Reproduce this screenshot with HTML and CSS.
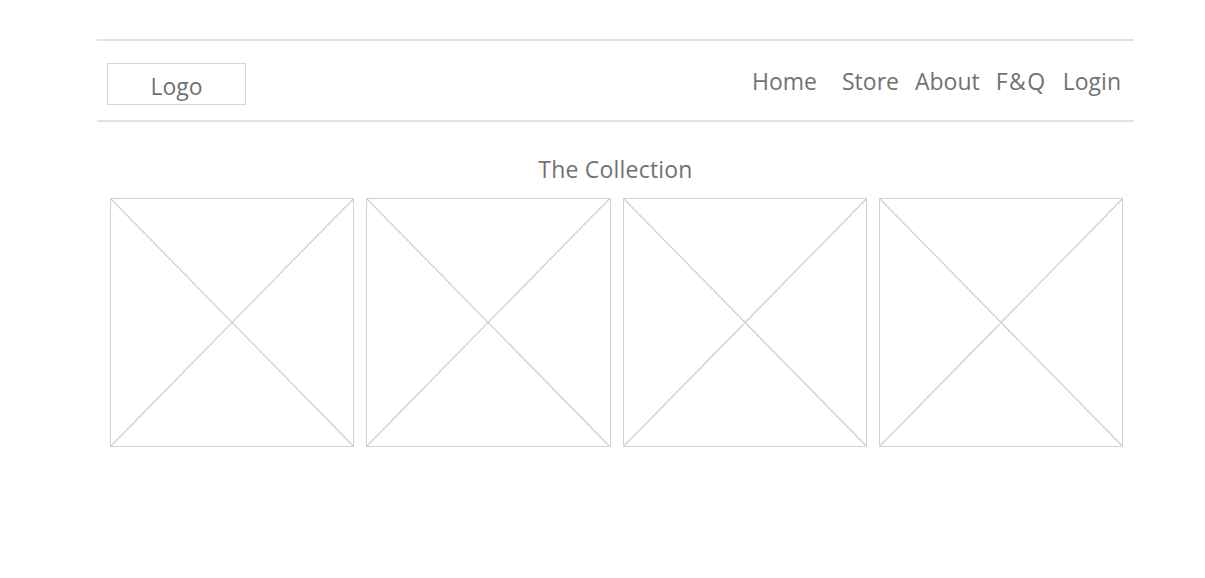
FILE: index.html
```html
<!DOCTYPE html>
<html>
<head>
<meta charset="utf-8">
<link rel="stylesheet" href="styles.css">
</head>
<body>
<div class="page">
  <header class="header">
    <div class="logo">Logo</div>
    <nav class="nav">
      <a class="nav-item nav-home">Home</a>
      <a class="nav-item">Store</a>
      <a class="nav-item">About</a>
      <a class="nav-item nav-fq">F&amp;Q</a>
      <a class="nav-item">Login</a>
    </nav>
  </header>
  <h2 class="title">The Collection</h2>
  <div class="grid">
    <div class="ph"><svg viewBox="0 0 100 100" preserveAspectRatio="none"><line x1="0" y1="0" x2="100" y2="100" vector-effect="non-scaling-stroke"/><line x1="100" y1="0" x2="0" y2="100" vector-effect="non-scaling-stroke"/></svg></div>
    <div class="ph"><svg viewBox="0 0 100 100" preserveAspectRatio="none"><line x1="0" y1="0" x2="100" y2="100" vector-effect="non-scaling-stroke"/><line x1="100" y1="0" x2="0" y2="100" vector-effect="non-scaling-stroke"/></svg></div>
    <div class="ph"><svg viewBox="0 0 100 100" preserveAspectRatio="none"><line x1="0" y1="0" x2="100" y2="100" vector-effect="non-scaling-stroke"/><line x1="100" y1="0" x2="0" y2="100" vector-effect="non-scaling-stroke"/></svg></div>
    <div class="ph"><svg viewBox="0 0 100 100" preserveAspectRatio="none"><line x1="0" y1="0" x2="100" y2="100" vector-effect="non-scaling-stroke"/><line x1="100" y1="0" x2="0" y2="100" vector-effect="non-scaling-stroke"/></svg></div>
  </div>
</div>
</body>
</html>
```
FILE: styles.css
```css
html, body {
  margin: 0;
  padding: 0;
  background: #fff;
}
body {
  font-family: "Open Sans", "Liberation Sans", sans-serif;
  color: #727272;
}
.page {
  width: 1037px;
  margin-left: 97px;
  padding-top: 39px;
}
.header {
  border-top: 2px solid #e2e2e2;
  border-bottom: 2px solid #e2e2e2;
  height: 79px;
  display: flex;
  align-items: flex-start;
  justify-content: space-between;
  padding: 0 13px 0 10px;
}
.logo {
  margin-top: 22px;
  width: 137px;
  height: 37px;
  padding-top: 3px;
  border: 1px solid #d4d4d4;
  display: flex;
  align-items: center;
  justify-content: center;
  font-size: 23px;
  box-sizing: content-box;
}
.nav {
  display: flex;
  margin-top: 24px;
  gap: 16px;
  font-size: 23px;
  line-height: 32px;
}
.nav-home {
  margin-right: 9px;
}
.nav-fq {
  letter-spacing: 1.5px;
}
.title {
  margin: 0;
  font-weight: normal;
  font-size: 23px;
  text-align: center;
  line-height: 30px;
  padding-top: 32px;
  height: 42px;
  box-sizing: border-box;
  letter-spacing: 0.2px;
}
.grid {
  display: grid;
  grid-template-columns: repeat(4, 1fr);
  column-gap: 12px;
  padding: 0 11px 0 13px;
  margin-top: 34px;
}
.ph {
  height: 249px;
  border: 1.5px solid #d2d2d2;
  box-sizing: border-box;
}
.ph svg {
  display: block;
  width: 100%;
  height: 100%;
}
.ph line {
  stroke: #d0d0d0;
  stroke-width: 1.3;
}
```
